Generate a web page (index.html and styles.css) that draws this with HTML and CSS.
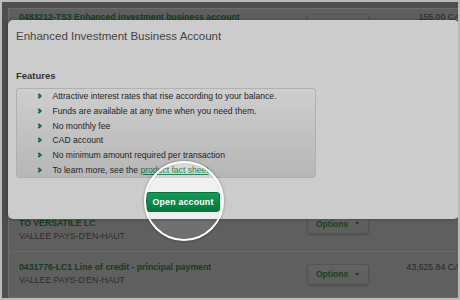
FILE: index.html
```html
<!DOCTYPE html>
<html lang="en">
<head>
    <meta charset="UTF-8">
    <meta name="viewport" content="width=device-width, initial-scale=1.0">
    <title>Accounts - Enhanced Investment Business Account</title>
    <link rel="stylesheet" href="styles.css">
</head>
<body>
    <div class="frame">
        <div class="panel">
            <div class="row row-first">
                <div class="acct">
                    <div class="acct-name">0483212-TS3 Enhanced investment business account</div>
                    <div class="acct-branch">VALLEE PAYS-D'EN-HAUT</div>
                </div>
                <button class="options">Options <span class="caret"></span></button>
                <div class="amount">155.00 CAD</div>
            </div>
            <div class="row">
                <div class="acct">
                    <div class="acct-name">0400318-EP1 High interest savings account</div>
                    <div class="acct-branch">VALLEE PAYS-D'EN-HAUT</div>
                </div>
                <button class="options">Options <span class="caret"></span></button>
                <div class="amount">2,310.47 CAD</div>
            </div>
            <div class="row">
                <div class="acct">
                    <div class="acct-name">0431776-VR1 Versatile line of credit</div>
                    <div class="acct-branch">VALLEE PAYS-D'EN-HAUT</div>
                </div>
                <button class="options">Options <span class="caret"></span></button>
                <div class="amount">12,000.00 CAD</div>
            </div>
            <div class="row">
                <div class="acct">
                    <div class="acct-name">0430512-HY2 Residential mortgage loan (fixed rate) - Interest and principal payment</div>
                    <div class="acct-branch">VALLEE PAYS-D'EN-HAUT</div>
                </div>
                <button class="options">Options <span class="caret"></span></button>
                <div class="amount">1,254.18 CAD</div>
            </div>
            <div class="row">
                <div class="acct">
                    <div class="acct-name">0430512-HY1 Residential mortgage loan (variable rate) - Transfer TO VERSATILE LC</div>
                    <div class="acct-branch">VALLEE PAYS-D'EN-HAUT</div>
                </div>
                <button class="options">Options <span class="caret"></span></button>
                <div class="amount">35,101.54 CAD</div>
            </div>
            <div class="row row-last">
                <div class="acct">
                    <div class="acct-name">0431776-LC1 Line of credit - principal payment</div>
                    <div class="acct-branch">VALLEE PAYS-D'EN-HAUT</div>
                </div>
                <button class="options">Options <span class="caret"></span></button>
                <div class="amount">43,625.84 CAD</div>
            </div>
        </div>

        <div class="modal">
            <h2 class="modal-title">Enhanced Investment Business Account</h2>
            <h3 class="features-title">Features</h3>
            <ul class="features">
                <li>Attractive interest rates that rise according to your balance.</li>
                <li>Funds are available at any time when you need them.</li>
                <li>No monthly fee</li>
                <li>CAD account</li>
                <li>No minimum amount required per transaction</li>
                <li>To learn more, see the&nbsp;<a href="#">product fact sheet</a>.</li>
            </ul>
            <div class="modal-actions">
                <button class="btn-open">Open account</button>
            </div>
        </div>

        <div class="spot-dim"></div>
        <div class="spot-ring"></div>
    </div>
</body>
</html>
```

FILE: styles.css
```css
body {
    margin: 0;
    font-family: "Liberation Sans", Arial, sans-serif;
}

.frame {
    position: relative;
    width: 460px;
    height: 300px;
    box-sizing: border-box;
    border: 2px solid #bababa;
    background: #5c5c5c;
    padding: 6px 0 0 6px;
    overflow: hidden;
}

/* account list behind the dialog */
.panel {
    width: 470px;
    background: #707070;
    border-top: 1px solid #7f7f7f;
    border-left: 1px solid #7f7f7f;
}

.row {
    display: grid;
    grid-template-columns: 288px 62px 97px;
    align-items: center;
    padding: 9px 0 8px 10px;
    border-bottom: 1px solid #7b7b7b;
    font-size: 8.7px;
    line-height: 13px;
}

.row-first {
    padding-top: 2px;
    padding-bottom: 12px;
}

.row-last {
    padding-bottom: 10px;
}

.acct {
    padding-right: 12px;
}

.acct-name {
    color: #1a4523;
    font-weight: bold;
}

.acct-branch {
    color: #333;
}

.options {
    display: flex;
    align-items: center;
    width: 62px;
    height: 21px;
    padding: 0 0 0 8px;
    border: 1px solid #626262;
    border-radius: 3px;
    background: linear-gradient(#747474, #6e6e6e);
    box-shadow: 0 1px 2px rgba(0,0,0,0.2);
    color: #244a20;
    font-family: "Liberation Sans", Arial, sans-serif;
    font-size: 8.5px;
    font-weight: bold;
}

.caret {
    margin-left: 7px;
    border-left: 2.5px solid transparent;
    border-right: 2.5px solid transparent;
    border-top: 3px solid #244a20;
}

.amount {
    align-self: start;
    text-align: right;
    color: #2e2e2e;
    white-space: nowrap;
}

/* dialog */
.modal {
    position: absolute;
    left: 6px;
    top: 18px;
    right: -1px;
    padding: 9px 8px 7px;
    background: #f0f0f0;
    border-radius: 5px;
    box-shadow: 0 0 4px rgba(0,0,0,0.35);
}

.modal-title {
    margin: 0;
    font-size: 11.5px;
    line-height: 14px;
    font-weight: normal;
    color: #515151;
}

.features-title {
    margin: 26.5px 0 6.5px;
    font-size: 9.5px;
    line-height: 12px;
    font-weight: bold;
    color: #3c3c3c;
}

.features {
    list-style: none;
    margin: 0;
    padding: 0;
    width: 298px;
    border: 1px solid #cfcfcf;
    border-radius: 3px;
    background: linear-gradient(#f2f2f2, #d6d6d6);
    font-size: 8.6px;
    color: #2a2a2a;
}

.features li {
    display: flex;
    align-items: center;
    height: 14.7px;
    padding-left: 20px;
}

.features li::before {
    content: "";
    flex: none;
    width: 2px;
    height: 2px;
    margin-right: 11.5px;
    border-top: 2px solid #1e7a44;
    border-right: 2px solid #1e7a44;
    transform: rotate(45deg);
}

.features a {
    color: #1f8655;
}

.modal-actions {
    margin-top: 13px;
}

.btn-open {
    width: 74px;
    height: 20px;
    margin-left: 130px;
    padding: 0;
    border: 1px solid #06703c;
    border-radius: 3px;
    background: linear-gradient(#169a58, #047a3d);
    color: #fff;
    font-family: "Liberation Sans", Arial, sans-serif;
    font-size: 8.8px;
    font-weight: bold;
    letter-spacing: 0.2px;
}

/* spotlight on the button */
.spot-dim {
    position: absolute;
    top: 0;
    left: 0;
    right: 0;
    bottom: 0;
    background: radial-gradient(circle at 182px 199px, transparent 38px, rgba(0,0,0,0.15) 38.5px);
    pointer-events: none;
}

.spot-ring {
    position: absolute;
    left: 142px;
    top: 159px;
    width: 80px;
    height: 80px;
    box-sizing: border-box;
    border: 2px solid #fff;
    border-radius: 50%;
    box-shadow: 0 0 3px rgba(0,0,0,0.4), inset 0 0 2px rgba(0,0,0,0.15);
    pointer-events: none;
}
```
